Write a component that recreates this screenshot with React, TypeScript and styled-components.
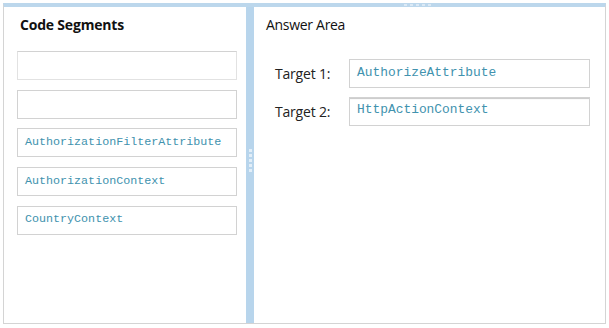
import React from 'react'
import styled, { createGlobalStyle } from 'styled-components'

const GlobalStyle = createGlobalStyle`
  html, body {
    margin: 0;
    padding: 0;
    background: #fff;
  }
  body {
    font-family: "Open Sans", "Noto Sans", sans-serif;
  }
`

const Frame = styled.div`
  position: relative;
  box-sizing: border-box;
  width: 603px;
  height: 321px;
  margin: 3px 0 0 3px;
  display: flex;
  border: 1px solid #d4d4d4;
  border-top: 4px solid #bcd7ec;
  background: #fff;
`

const TopGrip = styled.div`
  position: absolute;
  top: -4px;
  left: 397px;
  width: 32px;
  height: 3px;
  display: flex;
  gap: 3px;
  justify-content: center;
  align-items: center;
`

const Dot = styled.span`
  width: 3px;
  height: 2px;
  background: #dbe9f5;
`

const LeftPanel = styled.div`
  box-sizing: border-box;
  width: 242px;
  padding: 8px 9px 0 13px;
  display: flex;
  flex-direction: column;
`

const PanelTitle = styled.h2<{ $bold?: boolean }>`
  margin: 0;
  padding-left: ${(p) => (p.$bold ? '3px' : '0')};
  height: 20px;
  line-height: 20px;
  font-size: 14px;
  font-weight: ${(p) => (p.$bold ? 700 : 400)};
  color: #111;
  letter-spacing: ${(p) => (p.$bold ? '-0.2px' : '-0.3px')};
`

const SegmentList = styled.div`
  margin-top: 16px;
  display: flex;
  flex-direction: column;
  gap: 9.7px;
`

const Segment = styled.div<{ $faint?: boolean }>`
  box-sizing: border-box;
  width: 220px;
  height: 29px;
  border: 1px solid ${(p) => (p.$faint ? '#e2e2e2' : '#d2d2d2')};
  border-top-color: #d2d2d2;
  display: flex;
  align-items: center;
  padding: 0 0 2px 7px;
  font-family: "Liberation Mono", "DejaVu Sans Mono", monospace;
  font-size: 11.7px;
  color: #4192ae;
`

const Splitter = styled.div`
  width: 8px;
  background: #b8d5ec;
  display: flex;
  flex-direction: column;
  align-items: center;
  justify-content: center;
  gap: 2px;
  padding-bottom: 10px;
  box-sizing: border-box;
`

const SplitDot = styled.span`
  width: 3px;
  height: 3px;
  background: #e2eef8;
`

const RightPanel = styled.div`
  flex: 1;
  padding: 8px 0 0 12px;
  display: flex;
  flex-direction: column;
`

const TargetGrid = styled.div`
  margin-top: 24px;
  margin-left: 9px;
  display: grid;
  grid-template-columns: 74px 241px;
  row-gap: 9px;
  align-items: center;
`

const TargetLabel = styled.span`
  font-size: 14px;
  color: #222;
  letter-spacing: -0.2px;
`

const DropBox = styled.div<{ $inset?: boolean }>`
  box-sizing: border-box;
  height: 29px;
  border: 1px solid #d2d2d2;
  display: flex;
  align-items: center;
  padding-left: 7px;
  font-family: "Liberation Mono", "DejaVu Sans Mono", monospace;
  font-size: 12.9px;
  color: #4192ae;
  box-shadow: ${(p) => (p.$inset ? 'inset 0 2px 1px -1px #c8c8c8' : 'none')};
  padding-bottom: ${(p) => (p.$inset ? '4px' : '2px')};
`

const segments = ['', '', 'AuthorizationFilterAttribute', 'AuthorizationContext', 'CountryContext']

const targets = [
  { label: 'Target 1:', value: 'AuthorizeAttribute', inset: false },
  { label: 'Target 2:', value: 'HttpActionContext', inset: true },
]

export default function App() {
  return (
    <>
      <GlobalStyle />
      <Frame>
        <TopGrip>
          {[0, 1, 2, 3, 4].map((i) => <Dot key={i} />)}
        </TopGrip>
        <LeftPanel>
          <PanelTitle $bold>Code Segments</PanelTitle>
          <SegmentList>
            {segments.map((s, i) => <Segment key={i} $faint={i === 0}>{s}</Segment>)}
          </SegmentList>
        </LeftPanel>
        <Splitter>
          {[0, 1, 2, 3, 4].map((i) => <SplitDot key={i} />)}
        </Splitter>
        <RightPanel>
          <PanelTitle>Answer Area</PanelTitle>
          <TargetGrid>
            {targets.map((t) => (
              <React.Fragment key={t.label}>
                <TargetLabel>{t.label}</TargetLabel>
                <DropBox $inset={t.inset}>{t.value}</DropBox>
              </React.Fragment>
            ))}
          </TargetGrid>
        </RightPanel>
      </Frame>
    </>
  )
}
